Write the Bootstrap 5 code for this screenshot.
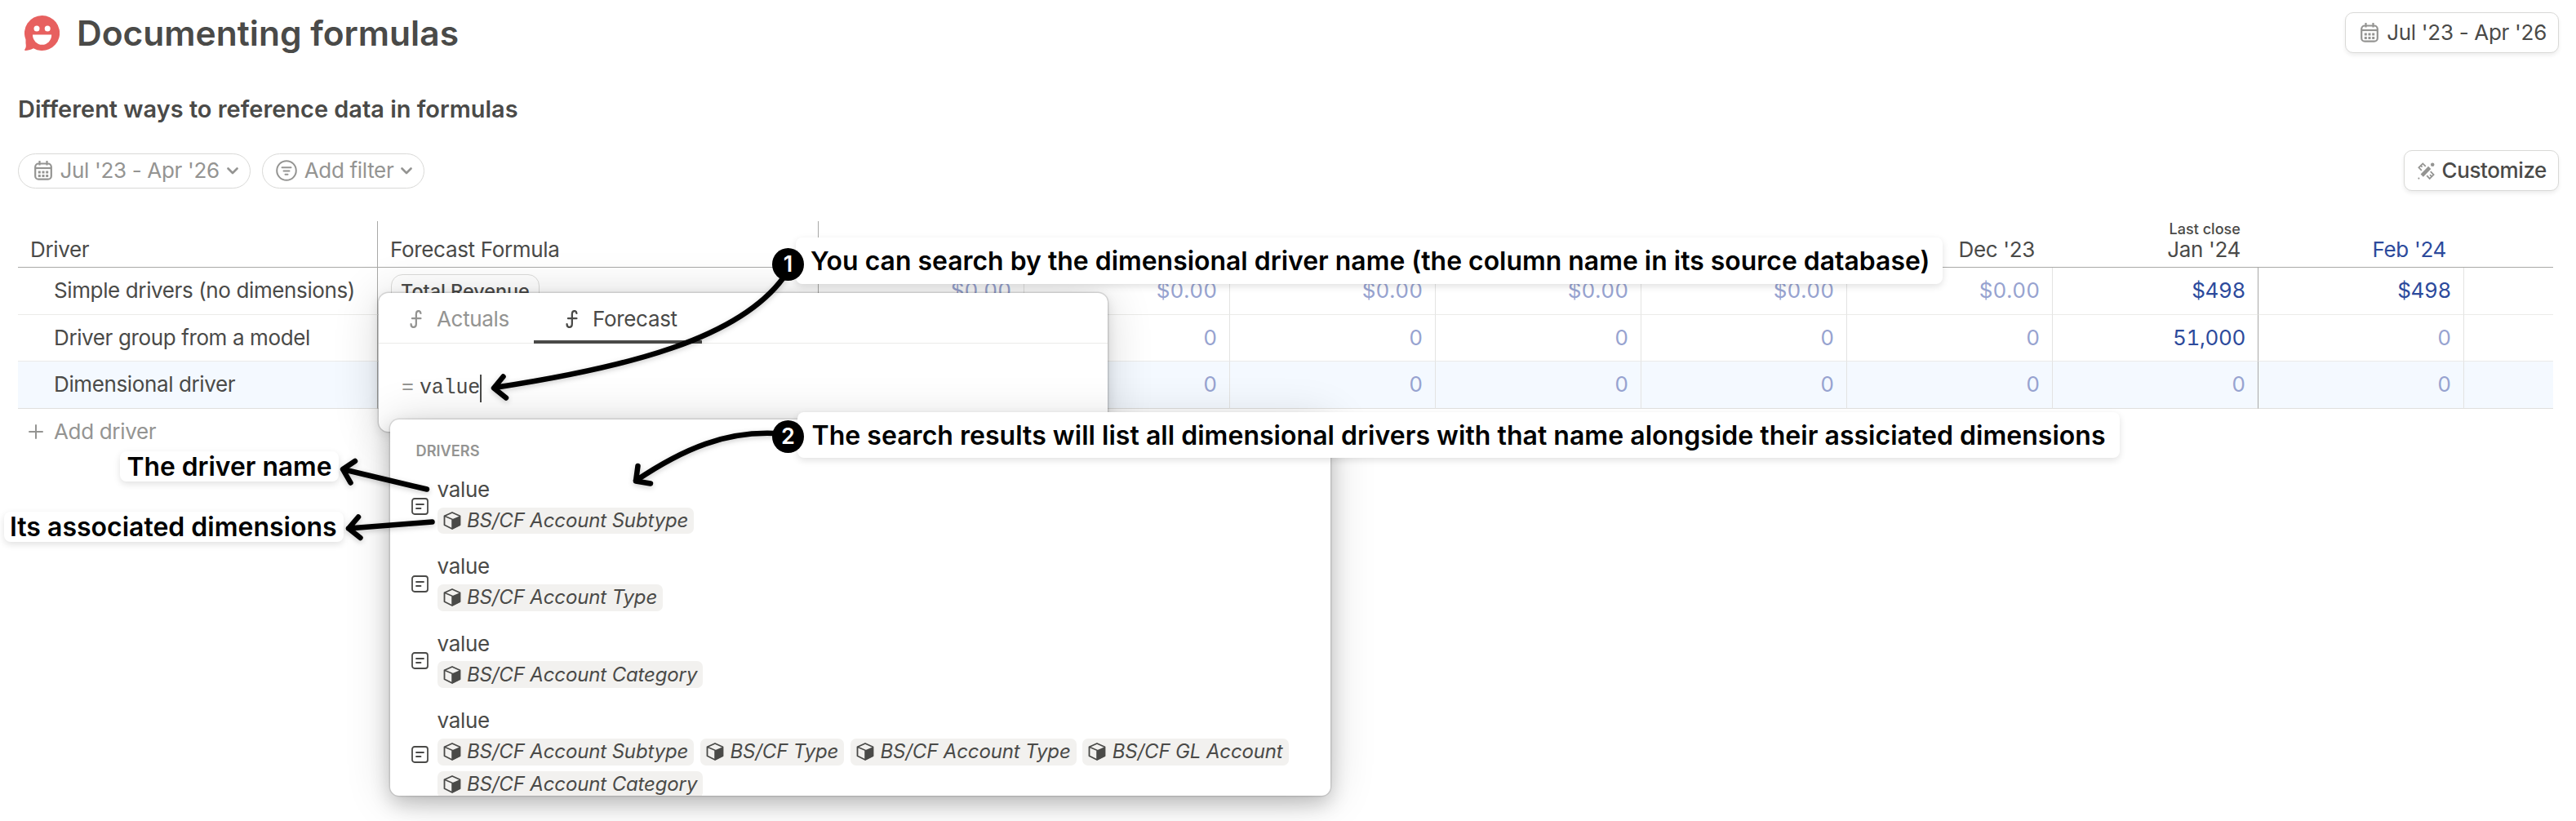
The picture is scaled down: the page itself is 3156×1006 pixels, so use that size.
<!DOCTYPE html>
<html lang="en">
<head>
<meta charset="utf-8">
<title>Documenting formulas</title>
<link href="https://cdn.jsdelivr.net/npm/bootstrap@5.3.0/dist/css/bootstrap.min.css" rel="stylesheet">
<style>
  body { font-family: Inter, "Liberation Sans", sans-serif; font-size: 26px; line-height: 32px; letter-spacing: -.33px; color: #4a4a48; background: #fff; height: 1006px; overflow: hidden; }
  svg { display: block; flex: none; }
  .page { padding: 15px 21px 0 22px; }
  .topbar { height: 50px; }
  .page-title { font-size: 42.5px; line-height: 50px; font-weight: 600; letter-spacing: 0; padding-left: 21px; padding-top: 2px; }
  .block-title { font-size: 28.9px; line-height: 36px; font-weight: 600; letter-spacing: .02px; margin-top: 51px; }
  .toolbar { height: 50px; margin-top: 32px; }
  .tool-btn { height: 50px; border: 1px solid #d9d9d7; border-radius: 10px; box-shadow: 0 3px 5px rgba(0,0,0,.07); color: #4a4a48; background: #fff; padding: 0 14px 0 18px; font-size: 26px; letter-spacing: -.3px; gap: 10.5px; }
  .tool-btn svg, .pill svg { color: #949492; }
  .tool-btn.customize { font-weight: 500; gap: 9px; padding-left: 16px; letter-spacing: -.4px; }
  .pill { height: 43px; border: 1px solid #d9d9d7; border-radius: 22px; color: #949492; gap: 9.5px; padding: 0 14px 0 19px; }
  .pill-filter { padding: 0 14px 0 16px; margin-left: 14px; gap: 8.5px; }

  .drivers { table-layout: fixed; width: 3106px; margin-top: 37px; border-collapse: separate; border-spacing: 0; }
  .drivers th { height: 57px; font-weight: 400; padding: 0 22px 6px 15px; vertical-align: bottom; border-bottom: 1px solid #a9a9a7; line-height: 31px; white-space: nowrap; }
  .drivers td { height: 57.6px; padding: 0 15px 0 44px; border-bottom: 1px solid #ebebe9; border-right: 1px solid #e3e3e2; white-space: nowrap; }
  .drivers td.num { color: #97a3d0; text-align: right; font-variant-numeric: tabular-nums; letter-spacing: 0; }
  .drivers td.num.set { color: #2c4a9c; letter-spacing: -.4px; }
  .drivers .rule { border-right: 1px solid #a9a9a7; }
  .drivers td:first-child { letter-spacing: -.38px; }
  .drivers td:last-child { border-right: 0; }
  .drivers .picked td { background: #f4f9ff; border-bottom-color: #e0e0de; }
  .last-close { font-size: 18px; font-weight: 500; line-height: 19px; letter-spacing: .05px; }
  .formula-chip { display: inline-block; height: 41px; line-height: 39px; border: 1px solid #dcdcda; border-radius: 14px; font-size: 23.4px; font-weight: 500; letter-spacing: 0; padding: 0 11px; }
  .add-driver { color: #949492; padding-left: 13px; gap: 13px; height: 57px; }

  .floating { position: absolute; background: #fff; }
  .editor { left: 464px; top: 359px; width: 893px; height: 170px; border-radius: 12px; box-shadow: 0 0 0 1.5px rgba(0,0,0,.12), 0 4px 14px rgba(0,0,0,.12), 0 4px 56px rgba(0,0,0,.16); }
  .tabs { height: 62px; border-bottom: 1px solid #ebebe9; }
  .tab-item { gap: 18px; padding: 2px 29px 0 38px; height: 62px; color: #949492; width: 190px; }
  .tab-item.on { width: 206px; padding: 6px 0 0 39px; color: #4a4a48; border-bottom: 4px solid #4a4a48; }
  .formula-line { font-family: "Liberation Mono", monospace; font-size: 25px; letter-spacing: -.2px; padding: 38px 0 0 28px; }
  .formula-line .eq { color: #949492; letter-spacing: -4px; margin-right: 11px; }
  .caret { width: 2px; height: 34px; background: #4a4a48; }

  .results { left: 478px; top: 514px; width: 1152px; height: 461px; border-radius: 11px; box-shadow: 0 0 0 1.5px rgba(0,0,0,.1), 0 10px 24px rgba(0,0,0,.2), 0 2px 56px rgba(0,0,0,.16); }
  .results-inner { height: 461px; overflow: hidden; border-radius: 11px; padding: 26px 25px 0 25.5px; }
  .group-label { font-size: 18.2px; font-weight: 600; line-height: 24px; letter-spacing: 0; color: #949492; padding-left: 6px; margin-bottom: 20px; }
  .result { gap: 11px; margin-bottom: 24.2px; }
  .result svg.doc { margin-top: 3px; }
  .dims { gap: 7.3px 7.7px; margin-top: 5.5px; }
  .dim { height: 32.8px; border-radius: 7px; background: #f2f1ef; font-size: 24px; font-style: italic; line-height: 32px; letter-spacing: -.14px; padding: 0 7px; gap: 7.5px; white-space: nowrap; }

  .note { color: #000; font-weight: 600; font-size: 32px; letter-spacing: 0; white-space: nowrap; border-radius: 8px; box-shadow: 0 3px 8px rgba(0,0,0,.12); }
  .note-1 { left: 975px; top: 291px; width: 1405px; height: 56.5px; line-height: 58px; padding-left: 18px; font-size: 31.9px; letter-spacing: .02px; }
  .note-2 { left: 977px; top: 505px; width: 1620px; height: 56px; line-height: 57px; padding-left: 17.5px; letter-spacing: .03px; }
  .note-3 { left: 147px; top: 553px; width: 268px; height: 37px; line-height: 38px; padding-left: 8.5px; font-size: 31.8px; }
  .note-4 { left: 5px; top: 627px; width: 416px; height: 37px; line-height: 38px; padding-left: 7px; }
  .step { position: absolute; left: 946px; width: 39px; height: 40px; border-radius: 50%; background: #000; color: #fff; font-size: 27px; font-weight: 600; letter-spacing: 0; line-height: 40px; text-align: center; }
  .arrows { position: absolute; left: 0; top: 0; filter: drop-shadow(0 2px 3px rgba(0,0,0,.2)); }
</style>
<script src="https://cdn.jsdelivr.net/npm/bootstrap@5.3.0/dist/js/bootstrap.bundle.min.js"></script>
</head>
<body class="position-relative">
<svg width="0" height="0" class="position-absolute">
  <symbol id="i-cal" viewBox="0 0 22 24"><g fill="none" stroke="currentColor" stroke-width="2.200"><rect x="1.200" y="3.500" width="19.600" height="19.200" rx="4"/><path d="M1 9h20"/><path d="M6.500 0v5.500M15.500 0v5.500"/></g><g fill="currentColor"><path d="M4.800 12.500h3v3h-3zM9.500 12.500h3v3h-3zM14.200 12.500h3v3h-3zM4.800 17h3v3h-3zM9.500 17h3v3h-3zM14.200 17h3v3h-3z"/></g></symbol>
  <symbol id="i-chev" viewBox="0 0 14 9"><path d="M1.500 1.500 7 7l5.500-5.500" fill="none" stroke="currentColor" stroke-width="2.600" stroke-linecap="round" stroke-linejoin="round"/></symbol>
  <symbol id="i-f" viewBox="0 0 40 63"><path d="M3 49Q3 60 11 60Q21 60 21 48V15Q21 3 30 3Q36 3 37 11M7 29H37" fill="none" stroke="currentColor" stroke-width="6.500" stroke-linecap="round"/></symbol>
  <symbol id="i-doc" viewBox="0 0 21 21"><g fill="none" stroke="currentColor" stroke-width="1.800" stroke-linecap="round"><rect x="1" y="1" width="19" height="19" rx="3"/><path d="M6 8h9M6 13h5.500"/></g></symbol>
  <symbol id="i-cube" viewBox="0 0 22 22"><path d="M11 1 20.500 5.300V16.300L11 21 1.500 16.300V5.300Z" fill="none" stroke="currentColor" stroke-width="1.800" stroke-linejoin="round"/><path d="M1.500 5.300 11 9.300V21" fill="none" stroke="currentColor" stroke-width="1.500"/><path d="M11 9.300 21 5V16.500L11 21.500Z" fill="currentColor"/></symbol>
</svg>

<div class="page">
  <header class="topbar d-flex align-items-center">
    <svg class="ms-2" width="43" height="43" viewBox="0 0 43 43"><path fill="#e7605f" d="M21.500 0a21.500 21.500 0 1 1-10.500 40.200C7.500 42 3.500 43 1 43 0 43 0 42 .5 41.300 2 39.500 2 37 1.500 34V29.500A21.500 21.500 0 0 1 21.500 0Z"/><circle cx="15" cy="16" r="3.500" fill="#fff"/><circle cx="28.200" cy="16" r="3.500" fill="#fff"/><path d="M10 23.400H33.200A11.600 12.400 0 0 1 10 23.400Z" fill="#fff"/></svg>
    <h1 class="page-title mb-0">Documenting formulas</h1>
    <button class="tool-btn d-flex align-items-center ms-auto"><svg width="22" height="24"><use href="#i-cal"/></svg>Jul '23 - Apr '26</button>
  </header>

  <h2 class="block-title mb-0">Different ways to reference data in formulas</h2>

  <div class="toolbar d-flex align-items-center">
    <div class="pill d-flex align-items-center"><svg width="22" height="24"><use href="#i-cal"/></svg>Jul '23 - Apr '26<svg width="14" height="9"><use href="#i-chev"/></svg></div>
    <div class="pill pill-filter d-flex align-items-center"><svg width="26" height="26" viewBox="0 0 26 26" fill="none" stroke="currentColor" stroke-width="2" stroke-linecap="round"><circle cx="13" cy="13" r="11.800"/><path d="M7.500 9.300h11M9.500 13.500h7M11.500 17.700h3"/></svg>Add filter<svg width="14" height="9"><use href="#i-chev"/></svg></div>
    <button class="tool-btn customize d-flex align-items-center ms-auto"><svg width="21" height="21" viewBox="0 0 60 60"><g fill="none" stroke="currentColor" stroke-width="5"><path d="M14 28 4 18 18 4 28 14M11 11l5 5M32 46 42 57 56 43 45 32M48 48l-5-5"/></g><path d="M15 46 42 18" stroke="currentColor" stroke-width="13"/><circle cx="52" cy="8" r="6.500" fill="currentColor"/><circle cx="4" cy="56" r="3" fill="currentColor"/></svg>Customize</button>
  </div>

  <table class="drivers">
    <colgroup><col style="width:441px"><col style="width:540px"><col span="8" style="width:252px"><col></colgroup>
    <thead>
      <tr><th class="rule">Driver</th><th class="rule">Forecast Formula</th><th></th><th></th><th></th><th></th><th></th><th class="text-end">Dec '23</th><th class="text-end"><div class="last-close">Last close</div>Jan '24</th><th class="text-end" style="color:#2c4a9c">Feb '24</th><th></th></tr>
    </thead>
    <tbody>
      <tr><td class="rule">Simple drivers (no dimensions)</td><td class="rule align-top" style="padding:8px 0 0 16px"><span class="formula-chip">Total Revenue</span></td><td class="num">$0.00</td><td class="num">$0.00</td><td class="num">$0.00</td><td class="num">$0.00</td><td class="num">$0.00</td><td class="num">$0.00</td><td class="num set rule">$498</td><td class="num set">$498</td><td></td></tr>
      <tr><td class="rule">Driver group from a model</td><td class="rule"></td><td class="num"></td><td class="num">0</td><td class="num">0</td><td class="num">0</td><td class="num">0</td><td class="num">0</td><td class="num set rule">51,000</td><td class="num">0</td><td></td></tr>
      <tr class="picked"><td class="rule">Dimensional driver</td><td class="rule"></td><td class="num"></td><td class="num">0</td><td class="num">0</td><td class="num">0</td><td class="num">0</td><td class="num">0</td><td class="num rule">0</td><td class="num">0</td><td></td></tr>
    </tbody>
  </table>
  <div class="add-driver d-flex align-items-center"><svg width="18" height="18" viewBox="0 0 18 18" stroke="currentColor" stroke-width="2" stroke-linecap="round"><path d="M9 1v16M1 9h16"/></svg>Add driver</div>
</div>

<section class="floating editor">
  <div class="tabs d-flex">
    <div class="tab-item d-flex align-items-center"><svg width="15" height="22"><use href="#i-f"/></svg>Actuals</div>
    <div class="tab-item on d-flex align-items-center"><svg width="15" height="22"><use href="#i-f"/></svg>Forecast</div>
  </div>
  <div class="formula-line d-flex align-items-center"><span class="eq">=</span>value<span class="caret"></span></div>
</section>

<section class="floating results">
  <div class="results-inner">
    <div class="group-label">DRIVERS</div>
    <div class="result d-flex align-items-center"><svg class="doc" width="21" height="21"><use href="#i-doc"/></svg><div><div>value</div><div class="dims d-flex flex-wrap"><span class="dim d-flex align-items-center"><svg width="22" height="22"><use href="#i-cube"/></svg>BS/CF Account Subtype</span></div></div></div>
    <div class="result d-flex align-items-center"><svg class="doc" width="21" height="21"><use href="#i-doc"/></svg><div><div>value</div><div class="dims d-flex flex-wrap"><span class="dim d-flex align-items-center"><svg width="22" height="22"><use href="#i-cube"/></svg>BS/CF Account Type</span></div></div></div>
    <div class="result d-flex align-items-center"><svg class="doc" width="21" height="21"><use href="#i-doc"/></svg><div><div>value</div><div class="dims d-flex flex-wrap"><span class="dim d-flex align-items-center"><svg width="22" height="22"><use href="#i-cube"/></svg>BS/CF Account Category</span></div></div></div>
    <div class="result d-flex align-items-center"><svg class="doc" width="21" height="21"><use href="#i-doc"/></svg><div><div>value</div><div class="dims d-flex flex-wrap"><span class="dim d-flex align-items-center"><svg width="22" height="22"><use href="#i-cube"/></svg>BS/CF Account Subtype</span><span class="dim d-flex align-items-center"><svg width="22" height="22"><use href="#i-cube"/></svg>BS/CF Type</span><span class="dim d-flex align-items-center"><svg width="22" height="22"><use href="#i-cube"/></svg>BS/CF Account Type</span><span class="dim d-flex align-items-center"><svg width="22" height="22"><use href="#i-cube"/></svg>BS/CF GL Account</span><span class="dim d-flex align-items-center"><svg width="22" height="22"><use href="#i-cube"/></svg>BS/CF Account Category</span></div></div></div>
  </div>
</section>

<div class="floating note note-1">You can search by the dimensional driver name (the column name in its source database)</div>
<div class="floating note note-2">The search results will list all dimensional drivers with that name alongside their assiciated dimensions</div>
<div class="floating note note-3">The driver name</div>
<div class="floating note note-4">Its associated dimensions</div>

<svg class="arrows" width="1100" height="700" fill="none" stroke="#000" stroke-width="6.500" stroke-linecap="round" stroke-linejoin="round">
  <path d="M960 340C905 415 770 450 606 475M616.500 461.500 605 475.500 620 487.500"/>
  <path d="M948 531C890 529 840 548 779 589M781.500 571 779 589.500 797 592.500"/>
  <path d="M523 599.500 420 575M435 565 420 575 429.500 591.500"/>
  <path d="M529.500 639.500 427 647.500M439 633.500 427 647.500 441.500 659"/>
</svg>
<div class="step" style="top:304px">1</div>
<div class="step" style="top:515px">2</div>
</body>
</html>
